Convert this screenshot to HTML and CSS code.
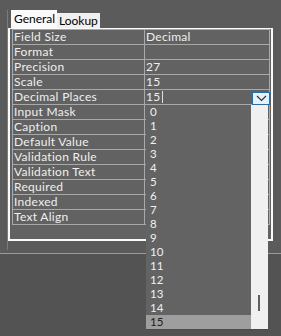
FILE: index.html
```html
<!DOCTYPE html>
<html lang="en">
<head>
    <meta charset="UTF-8">
    <title>Field Properties</title>
    <link rel="stylesheet" href="styles.css">
</head>
<body>
    <div class="top">
        <div class="tabctl">
            <div class="tabs">
                <div class="tab active">General</div>
                <div class="tab">Lookup</div>
            </div>
            <div class="panel">
                <table class="props">
                    <tr><td>Field Size</td><td>Decimal</td></tr>
                    <tr><td>Format</td><td></td></tr>
                    <tr><td>Precision</td><td>27</td></tr>
                    <tr><td>Scale</td><td>15</td></tr>
                    <tr><td>Decimal Places</td><td>15<span class="caret"></span></td></tr>
                    <tr><td>Input Mask</td><td></td></tr>
                    <tr><td>Caption</td><td></td></tr>
                    <tr><td>Default Value</td><td></td></tr>
                    <tr><td>Validation Rule</td><td></td></tr>
                    <tr><td>Validation Text</td><td></td></tr>
                    <tr><td>Required</td><td></td></tr>
                    <tr><td>Indexed</td><td></td></tr>
                    <tr><td>Text Align</td><td></td></tr>
                </table>
            </div>
        </div>
    </div>

    <!-- combo button + open list sit over the grid -->
    <div class="combo-btn">
        <svg width="11" height="7" viewBox="0 0 11 7"><path d="M1 1 L5.5 5.5 L10 1" fill="none" stroke="#333" stroke-width="1.2"/></svg>
    </div>
    <div class="droplist">
        <ul class="items">
            <li>0</li>
            <li>1</li>
            <li>2</li>
            <li>3</li>
            <li>4</li>
            <li>5</li>
            <li>6</li>
            <li>7</li>
            <li>8</li>
            <li>9</li>
            <li>10</li>
            <li>11</li>
            <li>12</li>
            <li>13</li>
            <li>14</li>
            <li class="selected">15</li>
        </ul>
        <div class="scrollbar"><div class="thumb"></div></div>
    </div>
</body>
</html>
```

FILE: styles.css
```css
body {
    margin: 0;
    background-color: #535353;
    font-family: Lato, 'Noto Sans', sans-serif;
    font-size: 12px;
    color: #f0f0f0;
    position: relative;
    height: 336px;
    overflow: hidden;
}
.top {
    box-sizing: border-box;
    height: 254px;
    padding: 10px 0 0 7px;
    background-color: #5b5b5b;
    border-bottom: 1px solid #9a9a9a;
}
.tabctl {
    width: 266px;
    height: 240px;
    border-left: 1px solid #7c7c7c;
}
.tabs {
    display: flex;
    align-items: flex-end;
    height: 18px;
    margin-left: 3px;
}
.tab {
    box-sizing: border-box;
    height: 15px;
    width: 43px;
    padding-left: 2px;
    background-color: #f0f0f0;
    color: #000;
    line-height: 15px;
}
.tab.active {
    height: 19px;
    width: 46px;
    margin-bottom: -1px;
    padding-left: 3px;
    background-color: #fafafa;
    line-height: 18px;
}
.panel {
    box-sizing: border-box;
    width: 265px;
    height: 213px;
    border: 2px solid #fafafa;
    border-top-width: 1px;
    padding: 0 1px 0 2px;
    background-color: #626262;
}
.props {
    border-collapse: collapse;
    width: 258px;
}
.props td {
    border: 1px solid #a9a9a9;
    height: 14px;
    padding: 0 0 0 1px;
    line-height: 14px;
    letter-spacing: 0.3px;
    white-space: nowrap;
    vertical-align: middle;
}
.props td:first-child {
    width: 130px;
}
.caret {
    display: inline-block;
    width: 1px;
    height: 12px;
    margin-left: 1px;
    vertical-align: -2px;
    background-color: #e0e0e0;
}
.combo-btn {
    position: absolute;
    left: 252px;
    top: 92px;
    box-sizing: border-box;
    width: 18px;
    height: 13px;
    border: 1px solid #0078d7;
    background-color: #e5f1fb;
    display: flex;
    justify-content: center;
    align-items: center;
}
.droplist {
    position: absolute;
    left: 146px;
    top: 105px;
    width: 122px;
    height: 224px;
    display: flex;
    background-color: #636363;
    box-shadow: 0 1px 0 #4a4a4a;
}
.items {
    list-style: none;
    margin: 0;
    padding: 0;
    flex: 1;
    font-size: 11.5px;
}
.items li {
    height: 14px;
    line-height: 14px;
    padding-left: 4px;
}
.items li.selected {
    background-color: #9e9e9e;
    color: #1a1a1a;
}
.scrollbar {
    position: relative;
    width: 17px;
    background-color: #f0f0f0;
}
.thumb {
    position: absolute;
    left: 7px;
    top: 190px;
    width: 2px;
    height: 16px;
    background-color: #606060;
}
```
